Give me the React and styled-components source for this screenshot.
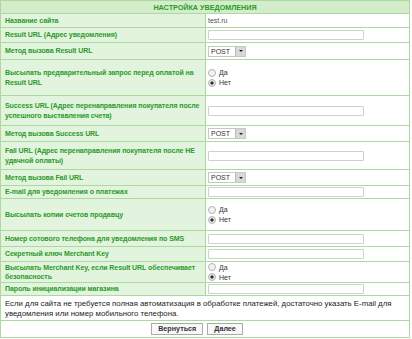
import React from 'react';
import styled, { createGlobalStyle } from 'styled-components';

const GlobalStyle = createGlobalStyle`
  body {
    margin: 0;
    background: #fff;
    font-family: 'Liberation Sans', Arial, sans-serif;
  }
`;

const rows = [
  { label: 'Название сайта', h: 13, kind: 'text', value: 'test.ru' },
  { label: 'Result URL (Адрес уведомления)', h: 14, kind: 'input' },
  { label: 'Метод вызова Result URL', h: 16, kind: 'select' },
  { label: 'Высылать предварительный запрос перед оплатой на Result URL', h: 35, kind: 'radio' },
  { label: 'Success URL (Адрес перенаправления покупателя после успешного выставления счета)', h: 29, kind: 'input' },
  { label: 'Метод вызова Success URL', h: 15, kind: 'select' },
  { label: 'Fail URL (Адрес перенаправления покупателя после НЕ удачной оплаты)', h: 27, kind: 'input' },
  { label: 'Метод вызова Fail URL', h: 15, kind: 'select' },
  { label: 'E-mail для уведомления о платежах', h: 12, kind: 'input' },
  { label: 'Высылать копии счетов продавцу', h: 31, kind: 'radio' },
  { label: 'Номер сотового телефона для уведомления по SMS', h: 15, kind: 'input' },
  { label: 'Секретный ключ Merchant Key', h: 14, kind: 'input' },
  { label: 'Высылать Merchant Key, если Result URL обеспечивает безопасность', h: 20, kind: 'radio' },
  { label: 'Пароль инициализации магазина', h: 12, kind: 'input' },
];

const Page = styled.div`
  width: 410px;
  padding: 0 0 2px 0;
`;

const Form = styled.div`
  display: grid;
  grid-template-columns: 204px 1fr;
  gap: 1px;
  background: #acd9a0;
  border: 1px solid #acd9a0;
`;

const Header = styled.div`
  grid-column: 1 / -1;
  height: 12px;
  background: #d3edcb;
  color: #2a9a2a;
  font-weight: bold;
  font-size: 7.2px;
  display: flex;
  align-items: center;
  justify-content: center;
`;

const Label = styled.div`
  height: ${p => p.$h}px;
  background: #e2f4de;
  color: #2a9a2a;
  font-weight: bold;
  font-size: 7px;
  letter-spacing: -0.08px;
  line-height: 9.5px;
  padding: 0 3px 0 4px;
  display: flex;
  align-items: center;
`;

const Value = styled.div`
  height: ${p => p.$h}px;
  background: #fff;
  color: #555;
  font-size: 7px;
  padding: 0 2px;
  display: flex;
  flex-direction: column;
  justify-content: center;
`;

const TextInput = styled.div`
  width: 154px;
  height: 8px;
  border: 1px solid #d0d0d0;
  border-radius: 1px;
  background: #fff;
`;

const Select = styled.div`
  display: flex;
  align-items: center;
  width: 36px;
  height: 9px;
  border: 1px solid #c8c8c8;
  font-size: 7px;
  color: #333;
`;

const SelectText = styled.span`
  flex: 1;
  padding-left: 2px;
`;

const SelectArrow = styled.span`
  width: 9px;
  height: 9px;
  background: #d8d8d8;
  border-left: 1px solid #bbb;
  display: flex;
  align-items: center;
  justify-content: center;
  &::after {
    content: '';
    border-left: 2px solid transparent;
    border-right: 2px solid transparent;
    border-top: 2px solid #222;
  }
`;

const RadioRow = styled.label`
  display: flex;
  align-items: center;
  gap: 3px;
  height: 10px;
  font-size: 7px;
  color: #333;
`;

const Radio = styled.span`
  width: 6px;
  height: 6px;
  border-radius: 50%;
  border: 1px solid #b4b4b4;
  background: ${p => (p.$on ? 'radial-gradient(circle, #333 0 1.4px, #e8e8e8 1.8px)' : '#f2f2f2')};
`;

const Info = styled.div`
  grid-column: 1 / -1;
  height: 23px;
  background: #fff;
  color: #222;
  font-size: 7.8px;
  line-height: 9.5px;
  padding: 1px 4px 0;
  display: flex;
  align-items: center;
`;

const Actions = styled.div`
  grid-column: 1 / -1;
  height: 16px;
  background: #fff;
  display: flex;
  justify-content: center;
  align-items: center;
  gap: 4px;
  padding-right: 16px;
`;

const Button = styled.button`
  font-family: inherit;
  font-size: 7.2px;
  font-weight: bold;
  color: #333;
  background: #f8f8f8;
  border: 1px solid #aaa;
  height: 12px;
  padding: 0 6px;
  line-height: 10px;
`;

function Control({ kind, value }) {
  if (kind === 'text') return <span>{value}</span>;
  if (kind === 'input') return <TextInput />;
  if (kind === 'select')
    return (
      <Select>
        <SelectText>POST</SelectText>
        <SelectArrow />
      </Select>
    );
  return (
    <>
      <RadioRow>
        <Radio />
        Да
      </RadioRow>
      <RadioRow>
        <Radio $on />
        Нет
      </RadioRow>
    </>
  );
}

export default function App() {
  return (
    <Page>
      <GlobalStyle />
      <Form>
        <Header>НАСТРОЙКА УВЕДОМЛЕНИЯ</Header>
        {rows.map(r => (
          <React.Fragment key={r.label}>
            <Label $h={r.h}>{r.label}</Label>
            <Value $h={r.h}>
              <Control kind={r.kind} value={r.value} />
            </Value>
          </React.Fragment>
        ))}
        <Info>
          Если для сайта не требуется полная автоматизация в обработке платежей, достаточно указать E-mail для
          уведомления или номер мобильного телефона.
        </Info>
        <Actions>
          <Button>Вернуться</Button>
          <Button>Далее</Button>
        </Actions>
      </Form>
    </Page>
  );
}
